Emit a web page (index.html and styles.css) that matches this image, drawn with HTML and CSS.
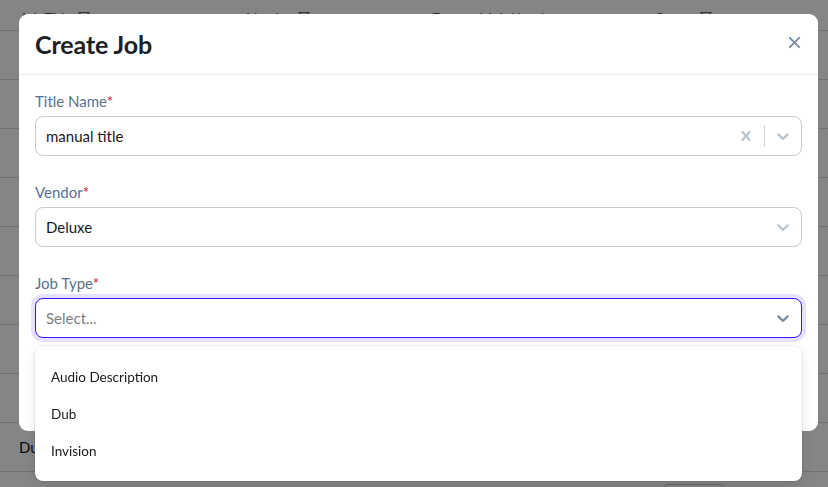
FILE: index.html
```html
<!DOCTYPE html>
<html lang="en">
<head>
<meta charset="utf-8">
<title>Create Job</title>
<link rel="stylesheet" href="styles.css">
</head>
<body>
<div class="page">
  <div class="table">
    <div class="thead">
      <div class="th col1">Job Title <svg class="filter" viewBox="0 0 12 12"><path d="M1 1.5h10L7 6v4.5L5 9.5V6z" fill="none" stroke="currentColor" stroke-width="1.2"/></svg></div>
      <div class="th col2">Vendor <svg class="filter" viewBox="0 0 12 12"><path d="M1 1.5h10L7 6v4.5L5 9.5V6z" fill="none" stroke="currentColor" stroke-width="1.2"/></svg></div>
      <div class="th col3">External Job Number</div>
      <div class="th col4">Status <svg class="filter" viewBox="0 0 12 12"><path d="M1 1.5h10L7 6v4.5L5 9.5V6z" fill="none" stroke="currentColor" stroke-width="1.2"/></svg></div>
    </div>
    <div class="tr"><div class="td">Audio Description</div></div>
    <div class="tr"><div class="td">Audio Description</div></div>
    <div class="tr"><div class="td">Dub</div></div>
    <div class="tr"><div class="td">Invision</div></div>
    <div class="tr"><div class="td">Dub</div></div>
    <div class="tr"><div class="td">Audio Description</div></div>
    <div class="tr"><div class="td">Dub</div></div>
    <div class="tr"><div class="td">Dub</div></div>
    <div class="tr"><div class="td">Dub</div></div>
    <div class="pager"><span class="pager-btn"></span></div>
  </div>
</div>

<div class="overlay"></div>

<div class="modal">
  <div class="modal-header">
    <h2 class="modal-title">Create Job</h2>
    <svg class="close" viewBox="0 0 14 14"><path d="M2 2l10 10M12 2L2 12" stroke="currentColor" stroke-width="2.2" stroke-linecap="round"/></svg>
  </div>
  <div class="modal-body">
    <div class="field">
      <div class="label">Title Name<span class="req">*</span></div>
      <div class="select">
        <div class="value">manual title</div>
        <div class="indicators">
          <span class="ind"><svg viewBox="0 0 20 20"><path d="M14.348 14.849c-0.469 0.469-1.229 0.469-1.697 0l-2.651-3.030-2.651 3.029c-0.469 0.469-1.229 0.469-1.697 0-0.469-0.469-0.469-1.229 0-1.697l2.758-3.15-2.759-3.152c-0.469-0.469-0.469-1.228 0-1.697s1.228-0.469 1.697 0l2.652 3.031 2.651-3.031c0.469-0.469 1.228-0.469 1.697 0s0.469 1.229 0 1.697l-2.758 3.152 2.758 3.15c0.469 0.469 0.469 1.229 0 1.698z"/></svg></span>
          <span class="sep"></span>
          <span class="ind"><svg viewBox="0 0 20 20"><path d="M4.516 7.548c0.436-0.446 1.043-0.481 1.576 0l3.908 3.747 3.908-3.747c0.533-0.481 1.141-0.446 1.574 0 0.436 0.445 0.408 1.197 0 1.615-0.406 0.418-4.695 4.502-4.695 4.502-0.217 0.223-0.502 0.335-0.787 0.335s-0.57-0.112-0.789-0.335c0 0-4.287-4.084-4.695-4.502s-0.436-1.170 0-1.615z"/></svg></span>
        </div>
      </div>
    </div>
    <div class="field">
      <div class="label">Vendor<span class="req">*</span></div>
      <div class="select">
        <div class="value">Deluxe</div>
        <div class="indicators">
          <span class="ind"><svg viewBox="0 0 20 20"><path d="M4.516 7.548c0.436-0.446 1.043-0.481 1.576 0l3.908 3.747 3.908-3.747c0.533-0.481 1.141-0.446 1.574 0 0.436 0.445 0.408 1.197 0 1.615-0.406 0.418-4.695 4.502-4.695 4.502-0.217 0.223-0.502 0.335-0.787 0.335s-0.57-0.112-0.789-0.335c0 0-4.287-4.084-4.695-4.502s-0.436-1.170 0-1.615z"/></svg></span>
        </div>
      </div>
    </div>
    <div class="field">
      <div class="label">Job Type<span class="req">*</span></div>
      <div class="select-wrap">
        <div class="select focused">
          <div class="value placeholder">Select...</div>
          <div class="indicators">
            <span class="ind dark"><svg viewBox="0 0 20 20"><path d="M4.516 7.548c0.436-0.446 1.043-0.481 1.576 0l3.908 3.747 3.908-3.747c0.533-0.481 1.141-0.446 1.574 0 0.436 0.445 0.408 1.197 0 1.615-0.406 0.418-4.695 4.502-4.695 4.502-0.217 0.223-0.502 0.335-0.787 0.335s-0.57-0.112-0.789-0.335c0 0-4.287-4.084-4.695-4.502s-0.436-1.170 0-1.615z"/></svg></span>
          </div>
        </div>
        <div class="menu">
          <div class="option">Audio Description</div>
          <div class="option">Dub</div>
          <div class="option">Invision</div>
        </div>
      </div>
    </div>
  </div>
</div>
</body>
</html>
```

FILE: styles.css
```css
* { box-sizing: border-box; }
html, body { margin: 0; padding: 0; overflow: hidden; }
body {
  width: 828px;
  height: 487px;
  font-family: Lato, "Open Sans", sans-serif;
  background: #fff;
  color: #1f2328;
}
.page { width: 828px; height: 487px; overflow: hidden; }
.thead {
  height: 31px;
  display: flex;
  border-bottom: 1px solid #d5d9de;
  font-size: 14px;
  color: #4d5560;
}
.th {
  display: flex;
  align-items: center;
  gap: 6px;
  padding-top: 4px;
}
.col1 { padding-left: 20px; width: 247px; }
.col2 { width: 185px; }
.col3 { width: 224px; }
.col4 { flex: 1; }
.filter { width: 12px; height: 12px; color: #5a6470; }
.tr {
  height: 49px;
  border-bottom: 1px solid #d5d9de;
  display: flex;
  align-items: center;
  padding-left: 19px;
  font-size: 15px;
  color: #111;
}
.pager { display: flex; padding-left: 661px; padding-top: 12px; }
.pager-btn {
  width: 67px; height: 30px;
  border: 1px solid #b8bec6;
  border-radius: 8px;
}
.overlay {
  position: fixed;
  inset: 0;
  background: rgba(0, 0, 0, 0.48);
}
.modal {
  position: fixed;
  top: 14px;
  left: 19px;
  width: 799px;
  height: 417px;
  background: #fff;
  border-radius: 9px;
}
.modal-header {
  height: 61px;
  border-bottom: 1px solid #ececec;
  display: flex;
  align-items: center;
  justify-content: space-between;
  padding: 0 16px;
}
.modal-title {
  margin: 0;
  font-size: 25px;
  font-weight: 700;
  color: #1d2025;
  letter-spacing: -0.1px;
}
.close { width: 13px; height: 13px; color: #7c8fa0; margin-right: 1px; margin-top: -4px; }
.modal-body { padding: 16px 16px; }
.field { margin-bottom: 26px; }
.label {
  display: block;
  font-size: 15px;
  line-height: 20px;
  color: #5c718b;
  margin-bottom: 5px;
}
.req { color: #cc1040; }
.select {
  height: 40px;
  border: 1px solid #cbcbcb;
  border-radius: 8px;
  display: flex;
  align-items: center;
  background: #fff;
}
.select.focused {
  border: 1px solid #3a10ff;
  box-shadow: 0 0 0 4px #e4e2fc;
}
.value {
  flex: 1;
  padding-left: 10px;
  font-size: 15px;
  line-height: 20px;
  color: #1a1a1a;
  margin-top: -1px;
}
.placeholder { color: #808080; }
.indicators { display: flex; align-items: center; align-self: stretch; }
.ind { padding: 8px; display: flex; }
.ind svg { width: 20px; height: 20px; fill: #b9c4cc; }
.ind.dark svg { fill: #7e8e9b; }
.sep { width: 1px; align-self: stretch; margin: 8px 0; background: #cdd3d8; }
.select-wrap { position: relative; }
.menu {
  position: absolute;
  top: 48px;
  left: 0;
  right: 0;
  padding: 12px 0;
  background: #fff;
  border-radius: 8px;
  box-shadow: 0 0 0 1px rgba(0,0,0,0.05), 0 4px 11px rgba(0,0,0,0.1);
}
.option {
  height: 37px;
  display: flex;
  align-items: center;
  padding-left: 16px;
  font-size: 13.5px;
  color: #1a1a1a;
}
```
